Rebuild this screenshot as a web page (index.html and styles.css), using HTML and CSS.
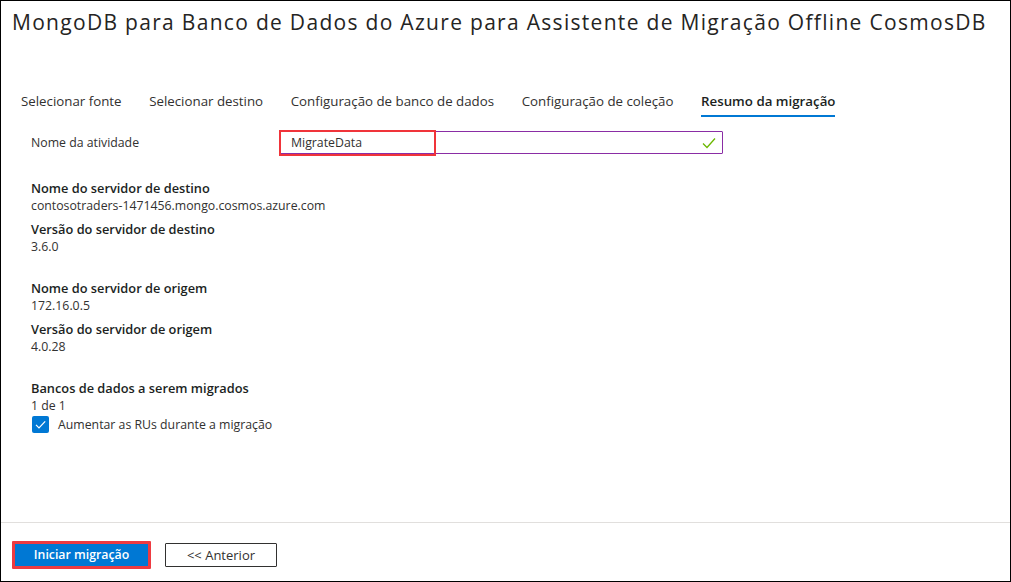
FILE: index.html
```html
<!DOCTYPE html>
<html lang="pt">
<head>
<meta charset="utf-8">
<title>Assistente de Migração</title>
<link rel="stylesheet" href="styles.css">
</head>
<body>
<div class="frame">
  <header class="head">
    <h1 class="title">MongoDB para Banco de Dados do Azure para Assistente de Migração Offline CosmosDB</h1>
  </header>
  <nav class="tabs">
    <span class="tab">Selecionar fonte</span>
    <span class="tab">Selecionar destino</span>
    <span class="tab">Configuração de banco de dados</span>
    <span class="tab">Configuração de coleção</span>
    <span class="tab active">Resumo da migração</span>
  </nav>
  <main class="content">
    <div class="field-row">
      <label class="field-label">Nome da atividade</label>
      <div class="input">
        <span class="input-value">MigrateData</span>
        <svg class="valid" width="14" height="12" viewBox="0 0 14 12"><path d="M1 6.5 L5 10.5 L13 1.5" fill="none" stroke="#6bb700" stroke-width="1.3"/></svg>
        <span class="highlight"></span>
      </div>
    </div>
    <section class="group first">
      <div class="item">
        <div class="item-label">Nome do servidor de destino</div>
        <div class="item-value">contosotraders-1471456.mongo.cosmos.azure.com</div>
      </div>
      <div class="item">
        <div class="item-label">Versão do servidor de destino</div>
        <div class="item-value">3.6.0</div>
      </div>
    </section>
    <section class="group">
      <div class="item">
        <div class="item-label">Nome do servidor de origem</div>
        <div class="item-value">172.16.0.5</div>
      </div>
      <div class="item">
        <div class="item-label">Versão do servidor de origem</div>
        <div class="item-value">4.0.28</div>
      </div>
    </section>
    <section class="group">
      <div class="item">
        <div class="item-label">Bancos de dados a serem migrados</div>
        <div class="item-value">1 de 1</div>
      </div>
      <div class="check-row">
        <span class="checkbox"><svg width="17" height="17" viewBox="0 0 17 17"><path d="M4 8.8 L7 11.8 L13.2 5.4" fill="none" stroke="#fff" stroke-width="1.2"/></svg></span>
        <span class="check-label">Aumentar as RUs durante a migração</span>
      </div>
    </section>
  </main>
  <footer class="foot">
    <button class="btn primary">Iniciar migração</button>
    <button class="btn secondary">&lt;&lt; Anterior</button>
  </footer>
</div>
</body>
</html>
```

FILE: styles.css
```css
* { box-sizing: border-box; }
html, body { margin: 0; padding: 0; background: #fff; }
body {
  font-family: "Open Sans", "Noto Sans", "Liberation Sans", sans-serif;
  color: #323130;
  width: 1011px;
  height: 582px;
  overflow: hidden;
}
.frame {
  width: 1011px;
  height: 582px;
  border: 1px solid #000;
  display: flex;
  flex-direction: column;
}
.head { padding: 6px 0 0 11px; }
.title {
  margin: 0;
  font-size: 21px;
  font-weight: 400;
  color: #252423;
  line-height: 30px;
  letter-spacing: 1.3px;
  white-space: nowrap;
}
.tabs {
  display: flex;
  gap: 27.6px;
  padding-left: 20px;
  margin-top: 55px;
  font-size: 13.3px;
}
.tab {
  line-height: 18px;
  padding-bottom: 7px;
  color: #323130;
  white-space: nowrap;
}
.tab.active {
  font-weight: 600;
  color: #201f1e;
  border-bottom: 2px solid #0078d4;
  padding-bottom: 5px;
}
.content {
  flex: 1;
  padding: 13px 0 0 30px;
  font-size: 12.3px;
}
.field-row {
  display: flex;
  align-items: center;
  height: 24px;
}
.field-label {
  width: 248px;
  color: #323130;
}
.input {
  position: relative;
  width: 444px;
  height: 23px;
  border: 1px solid #8a2da5;
  border-radius: 1px;
  display: flex;
  align-items: center;
  justify-content: space-between;
  padding: 0 6px 0 11px;
}
.input-value { color: #323130; }
.valid { margin-top: 1px; }
.highlight {
  position: absolute;
  left: -1px;
  top: -2px;
  width: 157px;
  height: 26px;
  border: 2px solid #f0343a;
}
.group { margin-top: 23px; }
.group.first { margin-top: 25px; }
.item { margin-bottom: 5px; }
.item-label {
  font-weight: 600;
  font-size: 12.8px;
  color: #201f1e;
  line-height: 18px;
}
.item-value {
  line-height: 18px;
  color: #323130;
}
.check-row {
  display: flex;
  align-items: center;
  gap: 9px;
  margin-top: -4px;
  padding-left: 1px;
}
.checkbox {
  width: 17px;
  height: 17px;
  background: #0078d4;
  border-radius: 2px;
  display: inline-flex;
}
.check-label { color: #323130; }
.foot {
  border-top: 1px solid #e1dfdd;
  height: 59px;
  display: flex;
  align-items: center;
  gap: 14px;
  padding: 5px 0 0 11px;
}
.btn {
  font-family: inherit;
  font-size: 12.3px;
  cursor: pointer;
  border-radius: 1px;
}
.primary {
  width: 139px;
  height: 28px;
  background: #0078d4;
  color: #fff;
  font-weight: 600;
  border: 3px solid #ee3b41;
}
.secondary {
  width: 112px;
  height: 24px;
  background: #fff;
  color: #323130;
  border: 1px solid #323130;
  font-size: 13px;
}
```
